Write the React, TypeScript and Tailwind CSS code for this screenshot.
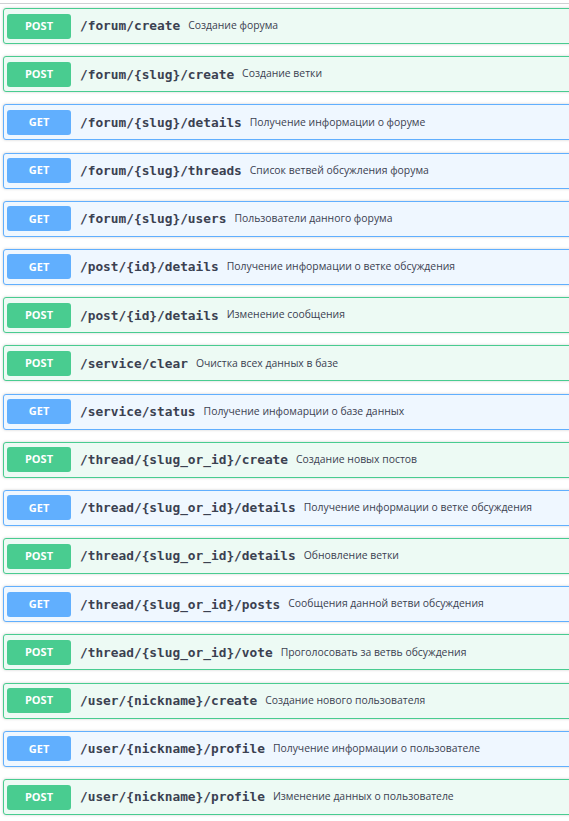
import React from 'react';

type Method = 'GET' | 'POST';

interface Op {
  method: Method;
  path: string;
  summary: string;
}

const ops: Op[] = [
  { method: 'POST', path: '/forum/create', summary: 'Создание форума' },
  { method: 'POST', path: '/forum/{slug}/create', summary: 'Создание ветки' },
  { method: 'GET', path: '/forum/{slug}/details', summary: 'Получение информации о форуме' },
  { method: 'GET', path: '/forum/{slug}/threads', summary: 'Список ветвей обсужления форума' },
  { method: 'GET', path: '/forum/{slug}/users', summary: 'Пользователи данного форума' },
  { method: 'GET', path: '/post/{id}/details', summary: 'Получение информации о ветке обсуждения' },
  { method: 'POST', path: '/post/{id}/details', summary: 'Изменение сообщения' },
  { method: 'POST', path: '/service/clear', summary: 'Очистка всех данных в базе' },
  { method: 'GET', path: '/service/status', summary: 'Получение инфомарции о базе данных' },
  { method: 'POST', path: '/thread/{slug_or_id}/create', summary: 'Создание новых постов' },
  { method: 'GET', path: '/thread/{slug_or_id}/details', summary: 'Получение информации о ветке обсуждения' },
  { method: 'POST', path: '/thread/{slug_or_id}/details', summary: 'Обновление ветки' },
  { method: 'GET', path: '/thread/{slug_or_id}/posts', summary: 'Сообщения данной ветви обсуждения' },
  { method: 'POST', path: '/thread/{slug_or_id}/vote', summary: 'Проголосовать за ветвь обсуждения' },
  { method: 'POST', path: '/user/{nickname}/create', summary: 'Создание нового пользователя' },
  { method: 'GET', path: '/user/{nickname}/profile', summary: 'Получение информации о пользователе' },
  { method: 'POST', path: '/user/{nickname}/profile', summary: 'Изменение данных о пользователе' },
];

const OpBlock: React.FC<{ op: Op }> = ({ op }) => {
  const isGet = op.method === 'GET';
  return (
    <div
      className={`mb-[12.19px] ml-[3px] flex h-[36px] items-center rounded-[3px] border pl-[3px] pr-1 shadow-[0_0_3px_rgba(0,0,0,0.19)] ${
        isGet ? 'border-[#61affe] bg-[#eff7ff]' : 'border-[#49cc90] bg-[#edfaf4]'
      }`}
    >
      <span
        className={`flex h-[25px] w-[64px] shrink-0 items-center justify-center rounded-[3px] text-[11px] font-bold text-white ${
          isGet ? 'bg-[#61affe]' : 'bg-[#49cc90]'
        }`}
        style={{ fontFamily: '"Open Sans", sans-serif' }}
      >
        {op.method}
      </span>
      <span
        className="ml-[9px] whitespace-nowrap text-[12.8px] font-bold text-[#3b4151]"
        style={{ fontFamily: '"DejaVu Sans Mono", monospace' }}
      >
        {op.path}
      </span>
      <span
        className="ml-[8px] whitespace-nowrap text-[10.4px] text-[#3b4151]"
        style={{ fontFamily: '"Open Sans", sans-serif' }}
      >
        {op.summary}
      </span>
    </div>
  );
};

export default function App() {
  return (
    <div className="h-[821px] w-[569px] overflow-hidden bg-white">
      <div className="w-[600px]">
        <div className="mt-[3px] h-px bg-[#cfd0d3]" />
        <div className="pt-[4px]">
          {ops.map((op, i) => (
            <OpBlock key={i} op={op} />
          ))}
        </div>
      </div>
    </div>
  );
}
